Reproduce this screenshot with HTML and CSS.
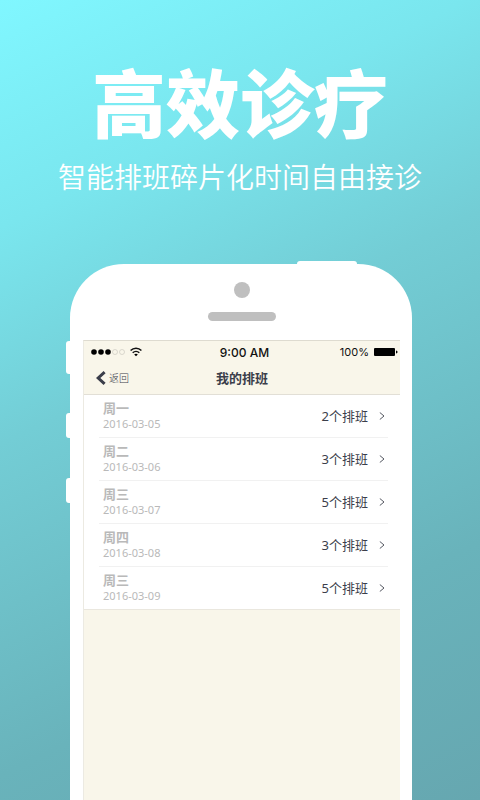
FILE: index.html
```html
<!DOCTYPE html>
<html lang="zh-CN">
<head>
  <meta charset="utf-8">
  <meta name="viewport" content="width=device-width, initial-scale=1">
  <title>高效诊疗</title>
  <link rel="stylesheet" href="styles.css">
</head>
<body>
  <header class="intro">
    <h1>高效诊疗</h1>
    <p>智能排班碎片化时间自由接诊</p>
  </header>

  <main class="phone">
    <span class="key key-power"></span>
    <span class="key key-mute"></span>
    <span class="key key-up"></span>
    <span class="key key-down"></span>
    <div class="phone-top">
      <span class="camera"></span>
      <span class="speaker"></span>
    </div>

    <div class="screen">
      <div class="status-bar">
        <div class="signal">
          <svg width="35" height="8" viewBox="0 0 35 8">
            <circle cx="3" cy="4" r="2.8"/>
            <circle cx="10" cy="4" r="2.8"/>
            <circle cx="17" cy="4" r="2.8"/>
            <circle class="empty" cx="24" cy="4" r="2.5"/>
            <circle class="empty" cx="31" cy="4" r="2.5"/>
          </svg>
          <svg width="12" height="10" viewBox="0 0 12 10">
            <path class="wave" d="M0.6 3.6C3.6 0.4 8.4 0.4 11.4 3.6"/>
            <path class="wave" d="M2.7 5.8C4.6 4 7.4 4 9.3 5.8"/>
            <path d="M6 9.2L4.2 7.4C5.2 6.5 6.8 6.5 7.8 7.4Z"/>
          </svg>
        </div>
        <span class="time">9:00 AM</span>
        <div class="battery">
          <span>100%</span>
          <svg width="24" height="8" viewBox="0 0 24 8">
            <rect width="21" height="8" rx="1"/>
            <path d="M22 2.5C24 2.5 24 5.5 22 5.5Z"/>
          </svg>
        </div>
      </div>

      <nav class="nav-bar">
        <a class="back" href="#">
          <svg width="10" height="14" viewBox="0 0 10 14"><path d="M8.6 1.2L2.2 7L8.6 12.8"/></svg>
          返回
        </a>
        <h2>我的排班</h2>
      </nav>

      <ul class="schedule">
        <li>
          <a href="#">
            <div class="day"><strong>周一</strong><time>2016-03-05</time></div>
            <span class="count">2个排班</span>
            <svg width="6" height="8" viewBox="0 0 6 8"><path d="M0.8 0.5L5 4L0.8 7.5"/></svg>
          </a>
        </li>
        <li>
          <a href="#">
            <div class="day"><strong>周二</strong><time>2016-03-06</time></div>
            <span class="count">3个排班</span>
            <svg width="6" height="8" viewBox="0 0 6 8"><path d="M0.8 0.5L5 4L0.8 7.5"/></svg>
          </a>
        </li>
        <li>
          <a href="#">
            <div class="day"><strong>周三</strong><time>2016-03-07</time></div>
            <span class="count">5个排班</span>
            <svg width="6" height="8" viewBox="0 0 6 8"><path d="M0.8 0.5L5 4L0.8 7.5"/></svg>
          </a>
        </li>
        <li>
          <a href="#">
            <div class="day"><strong>周四</strong><time>2016-03-08</time></div>
            <span class="count">3个排班</span>
            <svg width="6" height="8" viewBox="0 0 6 8"><path d="M0.8 0.5L5 4L0.8 7.5"/></svg>
          </a>
        </li>
        <li>
          <a href="#">
            <div class="day"><strong>周三</strong><time>2016-03-09</time></div>
            <span class="count">5个排班</span>
            <svg width="6" height="8" viewBox="0 0 6 8"><path d="M0.8 0.5L5 4L0.8 7.5"/></svg>
          </a>
        </li>
      </ul>
    </div>
  </main>
</body>
</html>
```
FILE: styles.css
```css
* {
  box-sizing: border-box;
}

body {
  display: flex;
  flex-direction: column;
  min-height: 100vh;
  margin: 0;
  font-family: "Noto Sans", "Noto Sans CJK SC", sans-serif;
  background: linear-gradient(154deg, #80f7ff 0%, #7ae6ee 22%, #73cdd5 43%, #69b3bb 75%, #66a7b0 100%);
}

a {
  color: inherit;
  text-decoration: none;
}

svg {
  display: block;
}

/* Slogan */
.intro {
  height: 264px;
  padding-top: 56px;
  color: #fff;
  text-align: center;
  white-space: nowrap;
  font-family: "Noto Sans CJK SC", sans-serif;
}

.intro h1 {
  margin: 0;
  font-size: 74px;
  font-weight: 900;
  line-height: 88px;
}

.intro p {
  margin: 12px 0 0;
  font-size: 28px;
  font-weight: 350;
  line-height: 40px;
}

/* Phone body */
.phone {
  position: relative;
  flex: 1;
  display: flex;
  flex-direction: column;
  margin: 0 68px 0 70px;
  padding: 0 12px 0 13px;
  background: #fff;
  border-radius: 54px 54px 0 0;
}

.key {
  position: absolute;
  left: -4px;
  width: 8px;
  height: 25px;
  background: #fff;
  border-radius: 3px;
}

.key-power {
  top: -3px;
  left: auto;
  right: 55px;
  width: 60px;
  height: 8px;
}

.key-mute {
  top: 77px;
  height: 33px;
}

.key-up {
  top: 149px;
}

.key-down {
  top: 214px;
}

.phone-top {
  display: flex;
  flex-direction: column;
  align-items: center;
  gap: 14px;
  height: 76px;
  padding-top: 18px;
}

.camera {
  width: 16px;
  height: 16px;
  background: #bfbfbf;
  border-radius: 50%;
}

.speaker {
  width: 68px;
  height: 9px;
  background: #bfbfbf;
  border-radius: 5px;
}

/* Screen */
.screen {
  flex: 1;
  background: #f9f6ea;
  border-top: 1px solid #dedbd0;
  border-left: 1px solid #eceae2;
}

.status-bar {
  display: grid;
  grid-template-columns: 1fr auto 1fr;
  align-items: center;
  height: 22px;
  padding: 0 2px 0 7px;
  font-family: Inter, sans-serif;
  font-size: 11px;
  color: #111;
}

.time {
  font-size: 12px;
  font-weight: 500;
}

.signal {
  display: flex;
  align-items: center;
  gap: 4px;
}

.signal .empty {
  fill: none;
  stroke: #c4c2ba;
  stroke-width: 0.6;
}

.signal .wave {
  fill: none;
  stroke: #111;
  stroke-width: 1.5;
}

.battery {
  display: flex;
  align-items: center;
  justify-content: flex-end;
  gap: 5px;
}

.nav-bar {
  display: grid;
  grid-template-columns: 1fr auto 1fr;
  align-items: center;
  height: 32px;
  padding: 0 12px 2px;
  color: #3b3e4a;
  border-bottom: 1px solid #e2dfd6;
}

.nav-bar h2 {
  margin: 0;
  font-size: 13px;
  font-weight: 700;
  line-height: 28px;
}

.back {
  display: flex;
  align-items: center;
  gap: 3px;
  font-size: 10px;
  font-weight: 300;
  line-height: 28px;
}

.back path {
  fill: none;
  stroke: #3b3e4a;
  stroke-width: 3;
}

/* Schedule list */
.schedule {
  margin: 0;
  padding: 0 0 0 15px;
  list-style: none;
  background: #fff;
  border-bottom: 1px solid #eae7de;
}

.schedule li {
  margin-right: 12px;
  border-bottom: 1px solid #f1f1f1;
}

.schedule li:last-child {
  border-bottom: none;
}

.schedule a {
  display: flex;
  align-items: center;
  height: 42px;
  padding: 0 3px 0 4px;
}

.day {
  flex: 1;
  display: flex;
  flex-direction: column;
  color: #b9b9b9;
}

.day strong {
  font-size: 13px;
  font-weight: 700;
  line-height: 15px;
}

.day time {
  font-size: 11px;
  line-height: 15px;
}

.count {
  margin-right: 11px;
  font-size: 13px;
  line-height: 18px;
  color: #3b3e4a;
}

.schedule path {
  fill: none;
  stroke: #555862;
}
```
